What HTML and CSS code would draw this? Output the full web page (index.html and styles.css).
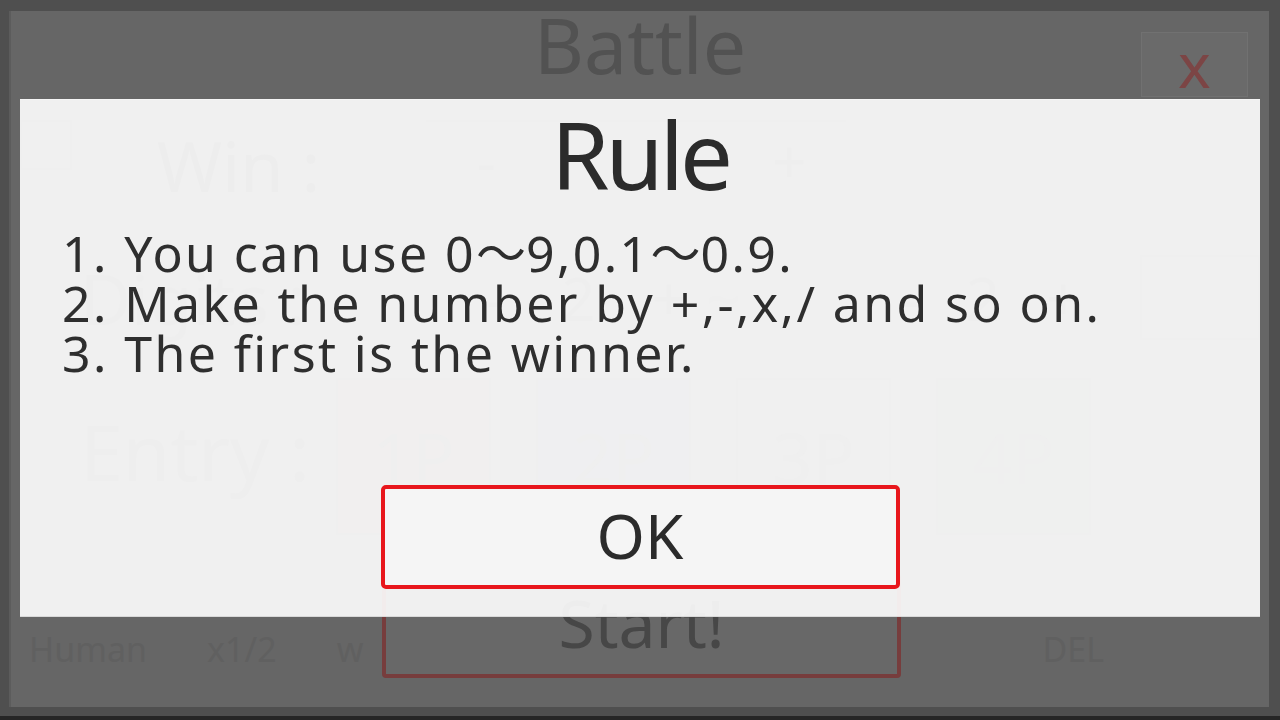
FILE: index.html
```html
<!DOCTYPE html>
<html lang="en">
<head>
<meta charset="utf-8">
<title>Battle - Rule</title>
<link rel="stylesheet" href="styles.css">
</head>
<body>
<div class="frame">
  <div class="panel">
    <header class="hdr">
      <div class="hdr-side"></div>
      <h1 class="title">Battle</h1>
      <div class="hdr-side hdr-right"><button class="close">x</button></div>
    </header>

    <div class="row win-row">
      <div class="stub"></div>
      <span class="lbl win-lbl">Win :</span>
      <div class="stepper win-stepper"><span>-</span><span>+</span></div>
    </div>

    <div class="row digits-row">
      <span class="lbl digits-lbl">Digits :</span>
      <div class="stepper dg1"><span>-</span><span>2</span><span>+</span></div>
      <span class="tilde">~</span>
      <div class="stepper dg2"><span>-</span><span>2</span><span>+</span></div>
      <div class="side-box"></div>
    </div>

    <div class="row entry-row">
      <span class="lbl entry-lbl">Entry :</span>
      <div class="pboxes">
        <div class="pbox p1">1P</div>
        <div class="pbox p2">2P</div>
        <div class="pbox p3">3P</div>
        <div class="pbox p4">4P</div>
      </div>
    </div>

    <div class="row foot-row">
      <div class="foot-left"><span>Human</span><span>x1/2</span><span>w</span></div>
      <button class="start">Start!</button>
      <div class="foot-right"><span>DEL</span></div>
    </div>
  </div>
</div>

<div class="dialog">
  <h2 class="rule-title">Rule</h2>
  <ol class="rules">
    <li>1. You can use 0<span class="wave">〜</span>9,0.1<span class="wave">〜</span>0.9.</li>
    <li>2. Make the number by +,-,x,/ and so on.</li>
    <li>3. The first is the winner.</li>
  </ol>
  <button class="ok">OK</button>
</div>
</body>
</html>
```
FILE: styles.css
```css
* { box-sizing: border-box; }

html, body {
  margin: 0;
  padding: 0;
  width: 1280px;
  height: 720px;
  overflow: hidden;
  font-family: "Noto Sans", "Noto Sans CJK JP", sans-serif;
}

body { position: relative; background: #4f4f4f; }

.frame {
  height: 720px;
  padding: 11px 11px 9px 9px;
  background: #4f4f4f;
  border-bottom: 4px solid #262626;
}

.panel {
  height: 696px;
  background: #666666;
  border-left: 2px solid #5c5c5c;
  display: flex;
  flex-direction: column;
}

/* ---------- header ---------- */
.hdr {
  height: 88px;
  display: grid;
  grid-template-columns: 1fr auto 1fr;
  align-items: start;
}
.title {
  margin: -6px 0 0;
  font-weight: 400;
  font-size: 77px;
  line-height: 80px;
  color: #525252;
}
.hdr-right { display: flex; justify-content: flex-end; }
.close {
  margin: 21px 21px 0 0;
  width: 107px;
  height: 65px;
  padding: 0 0 16px;
  border: 1px solid #717171;
  background: #6a6a6a;
  color: #7c4545;
  font-family: inherit;
  font-size: 62px;
  line-height: 1;
}

/* ---------- rows under the dialog ---------- */
.row { display: flex; align-items: center; }
.lbl { font-size: 70px; line-height: 1; color: #4a4a4a; }

.win-row { margin-top: 21px; height: 80px; align-items: flex-start; }
.stub { margin-left: 9px; width: 52px; height: 50px; border: 2px solid #5a5a5a; }
.win-lbl { margin-left: 85px; margin-top: 10px; }
.stepper {
  display: flex;
  justify-content: space-between;
  align-items: center;
  font-size: 60px;
  color: #585858;
}
.win-stepper {
  margin-left: 106px;
  width: 420px;
  height: 80px;
  padding: 0 40px 0 50px;
  border-top: 2px solid #5e5e5e;
}

.digits-row { margin-top: 55px; height: 85px; }
.digits-lbl { margin-left: 69px; color: #585858; }
.dg1 { margin-left: 180px; width: 200px; }
.tilde { margin-left: 20px; font-size: 60px; color: #5a5a5a; }
.dg2 { margin-left: 160px; width: 180px; }
.side-box { margin-left: 60px; width: 120px; height: 85px; border: 2px solid #5e5e5e; }

.entry-row { margin-top: 38px; height: 157px; }
.entry-lbl { margin-left: 69px; font-size: 77px; margin-top: -10px; color: #505050; }
.pboxes { margin-left: 26px; display: flex; gap: 45px; }
.pbox {
  width: 155px;
  height: 157px;
  display: flex;
  align-items: center;
  justify-content: center;
  font-size: 70px;
  color: #595959;
  border: 2px solid #5e5e5e;
}
.p1 { background: #725f5f; }
.p2 { background: #5f5f70; }
.p3 { background: #646464; }
.p4 { background: #606a60; }

.foot-row { margin-top: 39px; height: 104px; align-items: flex-end; }
.foot-left {
  width: 371px;
  display: flex;
  gap: 60px;
  padding: 0 0 6px 18px;
  font-size: 34px;
  color: #606060;
}
.start {
  width: 519px;
  height: 104px;
  padding: 0 0 8px;
  border: 4px solid #773d3d;
  border-radius: 4px;
  background: #686868;
  color: #474747;
  font-family: inherit;
  font-size: 66px;
  line-height: 1;
}
.foot-right {
  flex: 1;
  display: flex;
  justify-content: flex-end;
  padding: 0 165px 6px 0;
  font-size: 34px;
  color: #606060;
}

/* ---------- dialog ---------- */
.dialog {
  position: absolute;
  left: 20px;
  top: 99px;
  width: 1240px;
  height: 518px;
  background: rgba(255, 255, 255, 0.9);
  border-top: 1px solid #f6f6f6;
  border-bottom: 1px solid #d9d9d9;
  display: flex;
  flex-direction: column;
  align-items: center;
  color: #2b2b2b;
}

.rule-title {
  margin: 7px 0 0;
  font-weight: 400;
  font-size: 94px;
  line-height: 94px;
  letter-spacing: -4px;
  color: #2b2b2b;
}

.rules {
  align-self: stretch;
  list-style: none;
  margin: 24px 0 0;
  padding: 0 0 0 42px;
  font-size: 50px;
  line-height: 50px;
  letter-spacing: 2.4px;
  color: #2e2e2e;
}
.rules li { white-space: nowrap; }
.wave { font-family: "Noto Sans CJK JP", sans-serif; letter-spacing: -8px; margin-right: 8px; }

.ok {
  margin-top: 107px;
  width: 519px;
  height: 104px;
  padding: 0 0 4px;
  border: 4px solid #e8161c;
  border-radius: 5px;
  background: #f5f5f5;
  color: #2b2b2b;
  font-family: "Noto Sans", sans-serif;
  font-size: 62px;
  line-height: 1;
}
```
